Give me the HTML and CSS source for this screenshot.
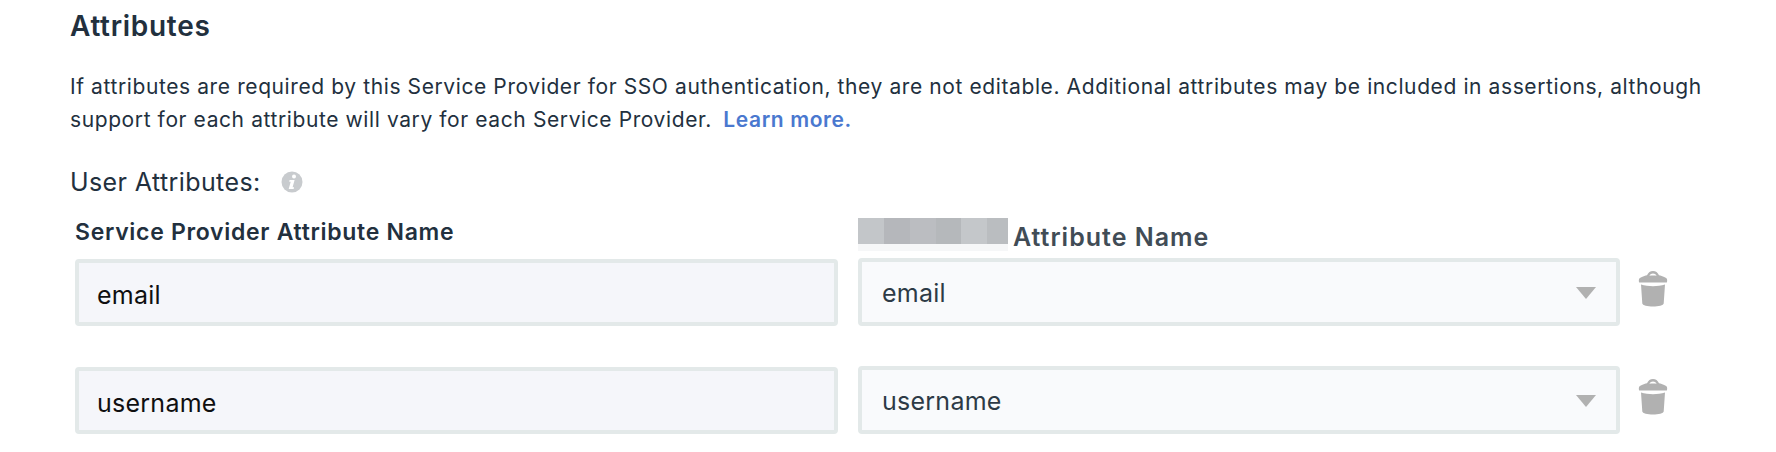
FILE: index.html
```html
<!DOCTYPE html>
<html lang="en">
<head>
    <meta charset="UTF-8">
    <title>Attributes</title>
    <link rel="stylesheet" href="styles.css">
</head>
<body>
    <h2 class="title">Attributes</h2>
    <p class="intro">If attributes are required by this Service Provider for SSO authentication, they are not editable. Additional attributes may be included in assertions, although<br>support for each attribute will vary for each Service Provider. <a href="#">Learn more.</a></p>

    <div class="user-label">
        <span>User Attributes:</span>
        <svg class="info" width="22" height="22" viewBox="0 0 22 22">
            <circle cx="11" cy="11" r="10.5" fill="#c8cbce"/>
            <circle cx="13" cy="5.600" r="2" fill="#fff"/>
            <path d="M8.600 9h5l-2 7.200h1.500l-.5 1.800H7.700l2-7.200H8.200z" fill="#fff"/>
        </svg>
    </div>

    <div class="heads">
        <div class="head-left">Service Provider Attribute Name</div>
        <div class="head-right">
            <div class="redacted">
                <div class="redacted-top">
                    <i class="t1"></i><i class="t2"></i><i class="t3"></i><i class="t4"></i><i class="t5"></i><i class="t6"></i>
                </div>
                <div class="redacted-fade"></div>
            </div>
            <span>Attribute Name</span>
        </div>
    </div>

    <div class="row">
        <div class="field">email</div>
        <div class="picker">
            <span>email</span>
            <b class="arrow"></b>
        </div>
        <svg class="trash" width="30" height="36" viewBox="0 0 30 36">
            <path fill-rule="evenodd" d="M15 0c2.800 0 4.700 1.500 6 4.200 3.500.8 7.500 2.200 8 4 .3 1.200.200 2.500-.2 3.300H1.200C.8 10.700.7 9.400 1 8.200c.5-1.800 4.500-3.200 8-4C10.300 1.500 12.200 0 15 0zm0 2.500c-1.500 0-2.800.8-3.600 2.300 1-.2 2.300-.3 3.600-.3s2.600.1 3.600.3C17.800 3.300 16.500 2.500 15 2.500z" fill="#b1b1b1"/>
            <path d="M3 13.500c3.500 1.200 8 1.700 12 1.700s8.500-.5 12-1.700l-1.300 19c-.1 1.700-5.300 3-10.700 3S4.400 34.200 4.300 32.500z" fill="#b1b1b1"/>
        </svg>
    </div>

    <div class="row">
        <div class="field">username</div>
        <div class="picker">
            <span>username</span>
            <b class="arrow"></b>
        </div>
        <svg class="trash" width="30" height="36" viewBox="0 0 30 36">
            <path fill-rule="evenodd" d="M15 0c2.800 0 4.700 1.500 6 4.200 3.500.8 7.500 2.200 8 4 .3 1.200.200 2.500-.2 3.300H1.200C.8 10.700.7 9.400 1 8.200c.5-1.800 4.500-3.200 8-4C10.300 1.500 12.200 0 15 0zm0 2.500c-1.500 0-2.800.8-3.600 2.300 1-.2 2.300-.3 3.600-.3s2.600.1 3.600.3C17.800 3.300 16.500 2.500 15 2.500z" fill="#b1b1b1"/>
            <path d="M3 13.500c3.500 1.200 8 1.700 12 1.700s8.500-.5 12-1.700l-1.300 19c-.1 1.700-5.300 3-10.700 3S4.400 34.200 4.300 32.500z" fill="#b1b1b1"/>
        </svg>
    </div>
</body>
</html>
```

FILE: styles.css
```css
body {
    font-family: Inter, "Noto Sans", sans-serif;
    font-variation-settings: "opsz" 14;
    margin: 0;
    padding: 11px 0 0 70px;
    background: #fff;
    color: #22303e;
    overflow: hidden;
}
.title {
    font-size: 28px;
    line-height: 30px;
    font-weight: 600;
    letter-spacing: .7px;
    margin: 0;
}
.intro {
    width: 1700px;
    font-size: 21px;
    line-height: 33px;
    letter-spacing: .6px;
    margin: 29px 0 0;
}
.intro a {
    margin-left: 5px;
    color: #4a78cf;
    font-weight: 600;
    text-decoration: none;
}
.user-label {
    display: flex;
    align-items: center;
    gap: 20px;
    margin-top: 28px;
    font-size: 25px;
    line-height: 36px;
    letter-spacing: .4px;
}
.info {
    flex: none;
}
.heads {
    display: flex;
    gap: 20px;
    height: 59px;
    margin-left: 5px;
    font-size: 23px;
    font-weight: 600;
    letter-spacing: .7px;
}
.head-left {
    width: 763px;
    padding-top: 19px;
    line-height: 27px;
}
.head-right {
    display: flex;
    align-items: flex-start;
    color: #414c56;
}
.head-right span {
    margin: 22px 0 0 5px;
    font-size: 25px;
    line-height: 30px;
    letter-spacing: 1px;
}
.redacted {
    width: 150px;
    margin-top: 18px;
}
.redacted-top {
    display: flex;
    height: 26px;
}
.redacted-top i {
    flex: 1;
}
.t1 { background: #c3c6c9; }
.t2 { background: #b5b7bb; }
.t3 { background: #bbbdc1; }
.t4 { background: #b5b8bb; }
.t5 { background: #c4c7ca; }
.t6 { background: #babdc0; flex: 0.8 !important; }
.redacted-fade {
    height: 7px;
    background: #f6f7f8;
}
.row {
    display: flex;
    align-items: flex-start;
    gap: 20px;
    margin-left: 5px;
}
.row + .row {
    margin-top: 41px;
}
.field, .picker {
    box-sizing: border-box;
    border: 4px solid #e3e9e9;
    border-radius: 4px;
    font-size: 25px;
    letter-spacing: .25px;
    display: flex;
    align-items: center;
}
.field {
    width: 763px;
    height: 67px;
    padding: 5px 0 0 18px;
    background: #f5f6fa;
    color: #0f0f10;
}
.picker {
    width: 762px;
    height: 68px;
    margin-top: -1px;
    padding: 2px 20px 0;
    background: #f9fafc;
    color: #2d3a46;
    justify-content: space-between;
}
.arrow {
    width: 0;
    height: 0;
    border-left: 10px solid transparent;
    border-right: 10px solid transparent;
    border-top: 12px solid #b1b1b1;
}
.trash {
    flex: none;
    margin: 12px 0 0 -2px;
}
```
